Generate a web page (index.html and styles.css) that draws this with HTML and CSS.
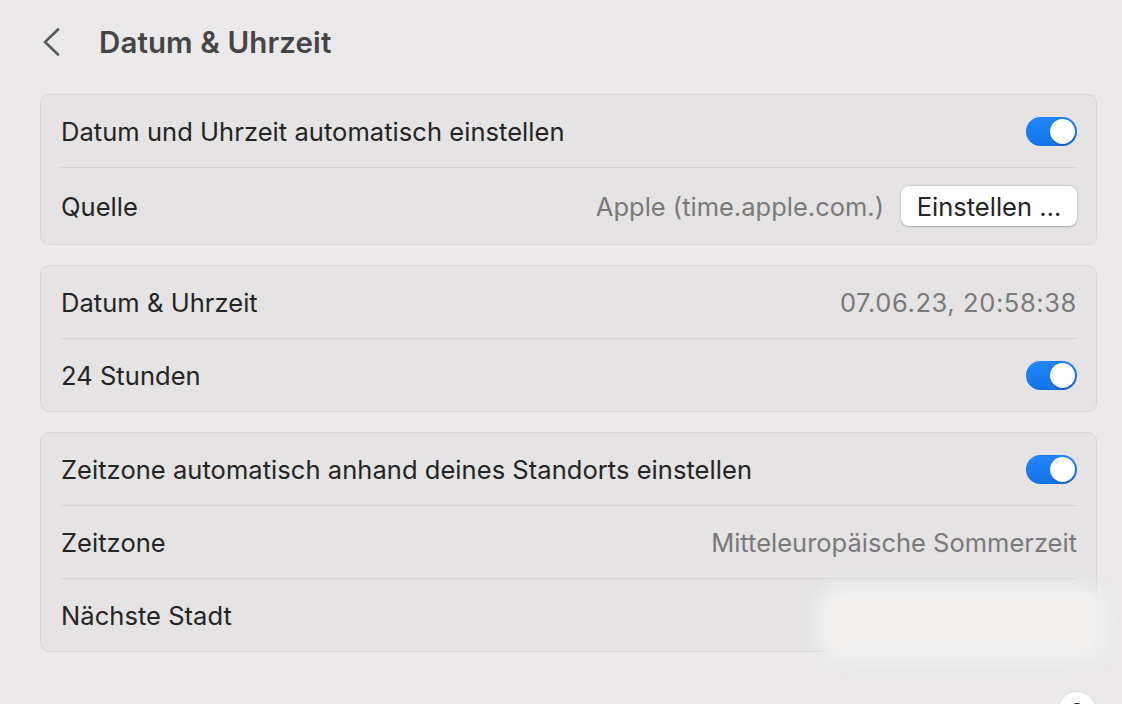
FILE: index.html
```html
<!DOCTYPE html>
<html lang="de">
<head>
<meta charset="utf-8">
<title>Datum &amp; Uhrzeit</title>
<link rel="stylesheet" href="styles.css">
</head>
<body>
<div class="page">
  <header class="header">
    <button class="back" aria-label="Zurück">
      <svg width="18" height="28" viewBox="0 0 18 28"><path d="M16 1.5 L3 14 L16 26.5" fill="none" stroke="#5a5a5a" stroke-width="2.6" stroke-linecap="round" stroke-linejoin="round"/></svg>
    </button>
    <h1 class="title">Datum &amp; Uhrzeit</h1>
  </header>

  <section class="card">
    <div class="row">
      <span class="label">Datum und Uhrzeit automatisch einstellen</span>
      <span class="toggle on"><span class="knob"></span></span>
    </div>
    <div class="row row-btn">
      <span class="label">Quelle</span>
      <span class="right">
        <span class="value">Apple (time.apple.com.)</span>
        <button class="btn">Einstellen …</button>
      </span>
    </div>
  </section>

  <section class="card">
    <div class="row">
      <span class="label">Datum &amp; Uhrzeit</span>
      <span class="value value-num">07.06.23, 20:58:38</span>
    </div>
    <div class="row">
      <span class="label">24 Stunden</span>
      <span class="toggle on"><span class="knob"></span></span>
    </div>
  </section>

  <section class="card">
    <div class="row">
      <span class="label">Zeitzone automatisch anhand deines Standorts einstellen</span>
      <span class="toggle on"><span class="knob"></span></span>
    </div>
    <div class="row">
      <span class="label">Zeitzone</span>
      <span class="value">Mitteleuropäische Sommerzeit</span>
    </div>
    <div class="row row-last">
      <span class="label">Nächste Stadt</span>
      <span class="smudge"></span>
    </div>
  </section>

  <div class="help-wrap">
    <button class="help">?</button>
  </div>
</div>
</body>
</html>
```

FILE: styles.css
```css
html, body {
  margin: 0;
  padding: 0;
  background: #ebe9ea;
  overflow: hidden;
  height: 704px;
}
body {
  font-family: "Inter", "Liberation Sans", sans-serif;
  color: #242424;
}
.page {
  padding: 0 25px 0 40px;
}
.header {
  display: flex;
  align-items: center;
  height: 84px;
}
.back {
  border: 0;
  background: none;
  padding: 0;
  margin: 0 0 0 2px;
  width: 18px;
  height: 28px;
  display: flex;
}
.title {
  margin: 0 0 0 39px;
  font-size: 29.5px;
  font-weight: 600;
  color: #454545;
  letter-spacing: 0.1px;
}
.card {
  background: #e5e3e4;
  border: 1px solid #d9d7d8;
  border-radius: 9px;
  margin-top: 10px;
}
.card + .card {
  margin-top: 20px;
}
.row {
  display: flex;
  align-items: center;
  justify-content: space-between;
  min-height: 72px;
  margin: 0 19px 0 20px;
  position: relative;
}
.row + .row {
  border-top: 1px solid #d6d4d5;
}
.row-btn {
  min-height: 76px;
}
.label {
  font-size: 25.5px;
  letter-spacing: 0.05px;
}
.value {
  font-size: 25.5px;
  color: #7a797a;
}
.value-num {
  letter-spacing: 0.6px;
}
.right {
  display: flex;
  align-items: center;
  gap: 17px;
}
.btn {
  font-family: inherit;
  font-size: 25.5px;
  color: #242424;
  background: #fff;
  border: 0;
  border-radius: 8px;
  height: 40px;
  width: 176px;
  padding: 0;
  box-shadow: 0 0.5px 2px rgba(0,0,0,0.25), 0 0 0 0.5px rgba(0,0,0,0.05);
}
.toggle {
  width: 51px;
  height: 29px;
  border-radius: 15px;
  background: linear-gradient(#2286fb, #1473e6);
  position: relative;
  display: inline-block;
  box-shadow: inset 0 0 0 0.5px rgba(0,0,0,0.08);
}
.toggle .knob {
  position: absolute;
  right: 2px;
  top: 2px;
  width: 25px;
  height: 25px;
  border-radius: 50%;
  background: #fff;
  box-shadow: 0 1px 2px rgba(0,0,0,0.25);
}
.smudge {
  position: absolute;
  left: 755px;
  right: -30px;
  top: 6px;
  bottom: -10px;
  background: #f1f0ef;
  filter: blur(8px);
  border-radius: 24px;
}
.help-wrap {
  display: flex;
  justify-content: flex-end;
  margin-top: 40px;
  padding-right: 1px;
}
.help {
  width: 38px;
  height: 38px;
  border-radius: 50%;
  background: #fff;
  border: 0;
  box-shadow: 0 0.5px 2px rgba(0,0,0,0.25);
  font-family: inherit;
  font-size: 22px;
  font-weight: 600;
  color: #2a2a2a;
  padding: 0;
  line-height: 38px;
}
```
